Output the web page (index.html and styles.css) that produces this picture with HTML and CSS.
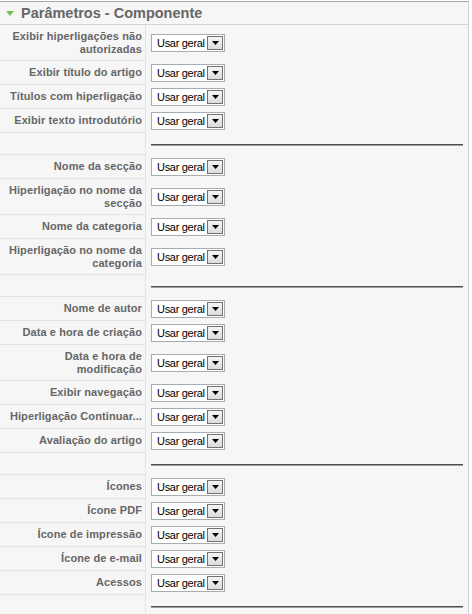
FILE: index.html
```html
<!DOCTYPE html>
<html>
<head>
<meta charset="utf-8">
<link rel="stylesheet" href="styles.css">
</head>
<body>
<div class="panel">
  <div class="panel-head">
    <svg class="tri" width="8" height="5" viewBox="0 0 8 5"><polygon points="0,0 8,0 4,5" fill="#7cbd5a"/></svg>
    <span class="title">Parâmetros - Componente</span>
  </div>
  <table class="params">
    <tbody id="rows"></tbody>
  </table>
</div>
<script src="app.js"></script>
</body>
</html>
```
FILE: app.js
```js
var rows = [
  ["Exibir hiperligações não autorizadas", 1],
  ["Exibir título do artigo"],
  ["Títulos com hiperligação"],
  ["Exibir texto introdutório"],
  null,
  ["Nome da secção"],
  ["Hiperligação no nome da secção", 1],
  ["Nome da categoria"],
  ["Hiperligação no nome da categoria", 1],
  null,
  ["Nome de autor"],
  ["Data e hora de criação"],
  ["Data e hora de modificação", 1],
  ["Exibir navegação"],
  ["Hiperligação Continuar..."],
  ["Avaliação do artigo"],
  null,
  ["Ícones"],
  ["Ícone PDF"],
  ["Ícone de impressão"],
  ["Ícone de e-mail"],
  ["Acessos"],
  null
];
var tb = document.getElementById("rows");
var html = "";
rows.forEach(function (r) {
  if (!r) {
    html += '<tr class="spacer"><td class="key"></td><td class="val"><div class="rule"></div></td></tr>';
  } else {
    html += '<tr><td class="key' + (r[1] ? ' two' : '') + '">' + r[0] + '</td>' +
      '<td class="val"><div class="sel"><span class="sel-text">Usar geral</span>' +
      '<span class="sel-btn"><svg width="7" height="4" viewBox="0 0 7 4"><polygon points="0,0 7,0 3.5,4" fill="#000"/></svg></span></div></td></tr>';
  }
});
tb.innerHTML = html;
```
FILE: styles.css
```css
html, body {
  margin: 0;
  padding: 0;
  background: #ffffff;
}
.panel {
  margin: 1px 3px 0 0;
  background: #f6f6f6;
  border: 1px solid #d0d0d0;
  border-top: 1px solid #a8a8a8;
  border-left: none;
  font-family: "Liberation Sans", Arial, sans-serif;
}
.panel-head {
  height: 22px;
  display: flex;
  align-items: center;
  padding-left: 6px;
  border-bottom: 1px solid #d4d4d4;
}
.tri {
  display: block;
  margin-right: 7px;
  margin-top: 1px;
}
.title {
  font-size: 14.5px;
  font-weight: bold;
  color: #666666;
  line-height: 17px;
}
.params {
  width: 100%;
  border-collapse: collapse;
}
.params td {
  padding: 0;
}
.key {
  width: 142px;
  padding: 5px 3px 5px 0 !important;
  text-align: right;
  vertical-align: middle;
  font-size: 11px;
  font-weight: bold;
  line-height: 13px;
  letter-spacing: 0.1px;
  color: #666666;
  border-bottom: 1px solid #e4e4e4;
  border-right: 1px solid #e4e4e4;
}
.key.two {
  padding-bottom: 4px !important;
}
.val {
  padding: 0 5px 0 5px !important;
  vertical-align: middle;
}
.spacer td {
  height: 21px;
}
.spacer .key {
  padding: 0 !important;
}
.rule {
  height: 0;
  border-top: 1px solid #4e4e4e;
  border-bottom: 1px solid #a0a0a0;
  margin-top: 3px;
}
.sel {
  display: flex;
  align-items: center;
  width: 72px;
  height: 16px;
  border: 1px solid #a5acb2;
  background: #ffffff;
}
.sel-text {
  flex: 1;
  padding-left: 5px;
  font-size: 11px;
  letter-spacing: -0.3px;
  color: #000000;
  line-height: 14px;
}
.sel-btn {
  width: 14px;
  height: 12px;
  margin-right: 1px;
  border: 1px solid #6f7378;
  background: linear-gradient(#f4f4f4, #dcdcdc);
  display: flex;
  align-items: center;
  justify-content: center;
}
.sel-btn svg {
  display: block;
  margin-top: 1px;
}
```
